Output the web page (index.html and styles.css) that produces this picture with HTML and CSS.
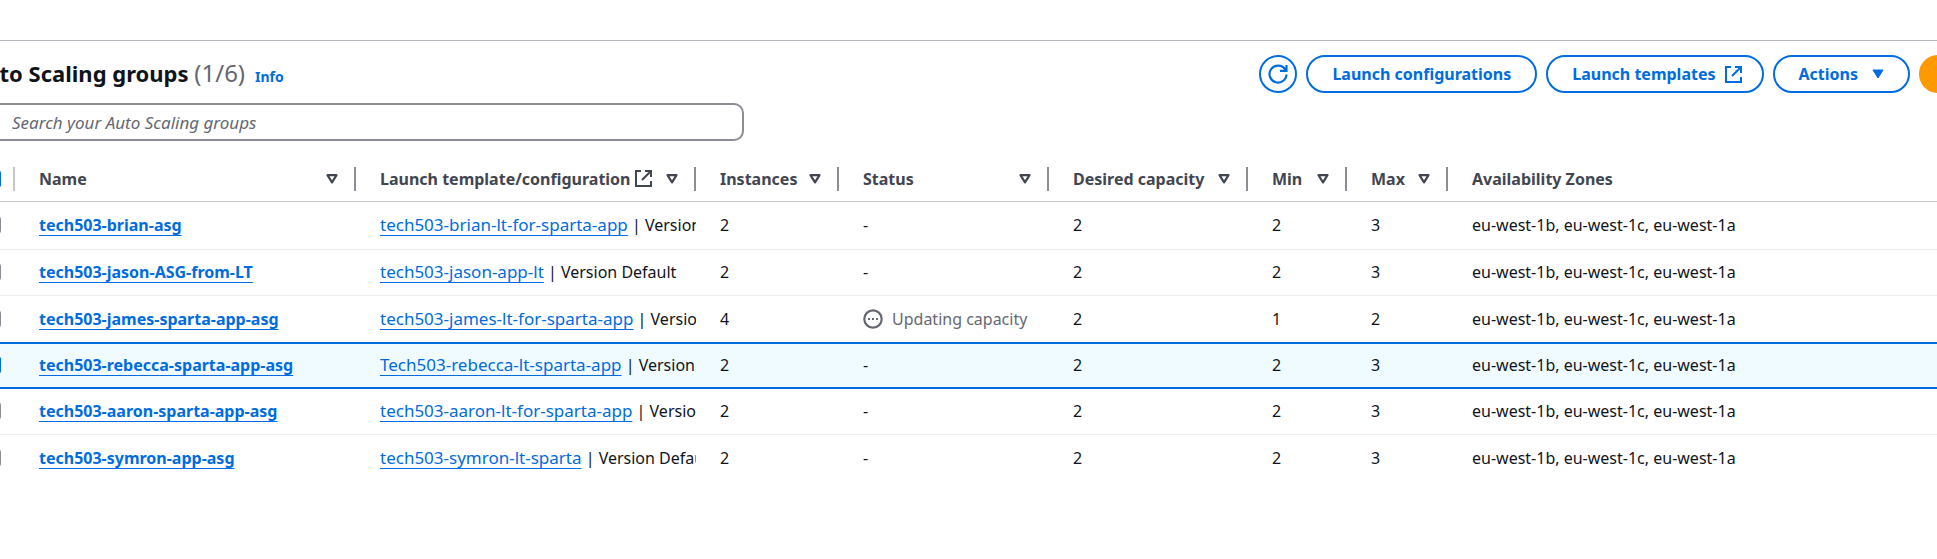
FILE: index.html
```html
<!DOCTYPE html>
<html lang="en">
<head>
<meta charset="utf-8">
<title>Auto Scaling groups</title>
<link rel="stylesheet" href="styles.css">
</head>
<body>
<svg class="sprite" aria-hidden="true">
  <symbol id="external" viewBox="0 0 17 17"><path d="M10 1h6v6M7 10l8.500-8.500M16 11v5H1V1h5" fill="none" stroke="currentColor" stroke-width="2"/></symbol>
  <symbol id="sort" viewBox="0 0 12 10"><path d="M1.500 1.200h9L6 8.300z" fill="none" stroke="currentColor" stroke-width="2.200" stroke-linejoin="round"/></symbol>
  <symbol id="caret" viewBox="0 0 12 10"><path d="M1 1h10L6 9z" fill="currentColor" stroke="currentColor" stroke-linejoin="round"/></symbol>
  <symbol id="refresh" viewBox="0 0 20 20"><path d="M18.500 10.500a8.500 8.500 0 1 1-1.500-5.300l1 1.300M18.500 1v5.800H12" fill="none" stroke="currentColor" stroke-width="2.200"/></symbol>
  <symbol id="pending" viewBox="0 0 20 20"><circle cx="10" cy="10" r="8.700" fill="none" stroke="currentColor" stroke-width="2.200"/><path d="M5 9h2v2H5zM9 9h2v2H9zM13 9h2v2h-2z" fill="currentColor"/></symbol>
</svg>
<main class="panel">
  <header class="head">
    <h1 class="title">Auto Scaling groups <span class="count">(1/6)</span></h1>
    <a class="info" href="#">Info</a>
    <div class="actions">
      <button class="btn round" aria-label="Refresh"><svg class="icon refresh"><use href="#refresh"/></svg></button>
      <button class="btn">Launch configurations</button>
      <button class="btn external">Launch templates <svg class="icon"><use href="#external"/></svg></button>
      <button class="btn menu">Actions <svg class="tri"><use href="#caret"/></svg></button>
      <button class="btn primary" aria-label="Create Auto Scaling group"></button>
    </div>
  </header>
  <input class="search" type="search" aria-label="Search your Auto Scaling groups" placeholder="Search your Auto Scaling groups">
  <table class="grid">
    <colgroup><col class="c-check"><col class="c-name"><col class="c-lt"><col class="c-inst"><col class="c-status"><col class="c-cap"><col class="c-min"><col class="c-max"><col></colgroup>
    <thead>
      <tr>
        <th class="pick"><div class="th first"><input class="check on" type="checkbox" aria-label="Select all"></div></th>
        <th><div class="th"><span>Name</span><svg class="tri"><use href="#sort"/></svg></div></th>
        <th><div class="th"><span class="label">Launch template/configuration <svg class="icon"><use href="#external"/></svg></span><svg class="tri"><use href="#sort"/></svg></div></th>
        <th><div class="th"><span>Instances</span><svg class="tri"><use href="#sort"/></svg></div></th>
        <th><div class="th"><span>Status</span><svg class="tri"><use href="#sort"/></svg></div></th>
        <th><div class="th"><span>Desired capacity</span><svg class="tri"><use href="#sort"/></svg></div></th>
        <th><div class="th"><span>Min</span><svg class="tri"><use href="#sort"/></svg></div></th>
        <th><div class="th"><span>Max</span><svg class="tri"><use href="#sort"/></svg></div></th>
        <th><div class="th last"><span>Availability Zones</span></div></th>
      </tr>
    </thead>
    <tbody>
      <tr><td class="pick"><input class="check" type="checkbox" aria-label="tech503-brian-asg"></td><td><a class="name" href="#">tech503-brian-asg</a></td><td><div class="clip"><a href="#">tech503-brian-lt-for-sparta-app</a> | Version Default</div></td><td>2</td><td>-</td><td>2</td><td>2</td><td>3</td><td>eu-west-1b, eu-west-1c, eu-west-1a</td></tr>
      <tr><td class="pick"><input class="check" type="checkbox" aria-label="tech503-jason-ASG-from-LT"></td><td><a class="name" href="#">tech503-jason-ASG-from-LT</a></td><td><div class="clip"><a href="#">tech503-jason-app-lt</a> | Version Default</div></td><td>2</td><td>-</td><td>2</td><td>2</td><td>3</td><td>eu-west-1b, eu-west-1c, eu-west-1a</td></tr>
      <tr><td class="pick"><input class="check" type="checkbox" aria-label="tech503-james-sparta-app-asg"></td><td><a class="name" href="#">tech503-james-sparta-app-asg</a></td><td><div class="clip"><a href="#">tech503-james-lt-for-sparta-app</a> | Version Default</div></td><td>4</td><td><div class="status"><svg class="icon pending"><use href="#pending"/></svg>Updating capacity</div></td><td>2</td><td>1</td><td>2</td><td>eu-west-1b, eu-west-1c, eu-west-1a</td></tr>
      <tr class="selected"><td class="pick"><input class="check on" type="checkbox" checked aria-label="tech503-rebecca-sparta-app-asg"></td><td><a class="name" href="#">tech503-rebecca-sparta-app-asg</a></td><td><div class="clip"><a href="#">Tech503-rebecca-lt-sparta-app</a> | Version Default</div></td><td>2</td><td>-</td><td>2</td><td>2</td><td>3</td><td>eu-west-1b, eu-west-1c, eu-west-1a</td></tr>
      <tr><td class="pick"><input class="check" type="checkbox" aria-label="tech503-aaron-sparta-app-asg"></td><td><a class="name" href="#">tech503-aaron-sparta-app-asg</a></td><td><div class="clip"><a href="#">tech503-aaron-lt-for-sparta-app</a> | Version Default</div></td><td>2</td><td>-</td><td>2</td><td>2</td><td>3</td><td>eu-west-1b, eu-west-1c, eu-west-1a</td></tr>
      <tr><td class="pick"><input class="check" type="checkbox" aria-label="tech503-symron-app-asg"></td><td><a class="name" href="#">tech503-symron-app-asg</a></td><td><div class="clip"><a href="#">tech503-symron-lt-sparta</a> | Version Default</div></td><td>2</td><td>-</td><td>2</td><td>2</td><td>3</td><td>eu-west-1b, eu-west-1c, eu-west-1a</td></tr>
    </tbody>
  </table>
</main>
</body>
</html>
```
FILE: styles.css
```css
* { box-sizing: border-box; }
body {
  margin: 0;
  padding-top: 40px;
  overflow: hidden;
  background: #fff;
  color: #0f141a;
  font: 16px/24px "Noto Sans", "Open Sans", sans-serif;
}
.sprite { display: none; }
.panel {
  margin: 0 -42px 0 -30px;
  border-top: 1px solid #b4b4bb;
}
.head {
  display: flex;
  align-items: center;
  padding-top: 14px;
}
.title { margin: 0; padding-bottom: 2px; font-size: 22px; line-height: 32px; font-weight: 700; }
.count { font-size: 24px; font-weight: 400; color: #656871; }
.info {
  margin: 6px 0 0 10px;
  font-size: 14px;
  font-weight: 700;
  text-decoration: none;
}
a { color: #006ce0; text-underline-offset: 4px; text-decoration-thickness: 1px; text-decoration-skip-ink: none; }
.actions { display: flex; gap: 9px; margin-left: auto; }
.btn {
  display: flex;
  align-items: center;
  justify-content: center;
  gap: 9px;
  height: 38px;
  padding: 0 24px;
  border: 2px solid #006ce0;
  border-radius: 20px;
  background: #fff;
  color: #006ce0;
  font: inherit;
  font-weight: 700;
  white-space: nowrap;
}
.round { width: 38px; padding: 0; }
.external { padding-right: 20px; }
.menu { gap: 14px; }
.primary { width: 60px; border-color: #f90; background: #f90; }
.icon { flex: none; width: 17px; height: 17px; }
.refresh { width: 20px; height: 20px; }
.pending { width: 20px; height: 20px; }
.tri { flex: none; width: 12px; height: 10px; }
.search {
  display: block;
  width: 774px;
  max-width: 100%;
  height: 38px;
  margin-top: 10px;
  padding: 0 40px;
  border: 2px solid #8c8c94;
  border-radius: 10px;
  background: #fff;
  font: inherit;
  font-size: 17px;
  appearance: none;
}
.search::placeholder { color: #656871; font-style: italic; opacity: 1; }
.grid {
  width: 100%;
  margin-top: 12px;
  table-layout: fixed;
  border-collapse: separate;
  border-spacing: 0;
}
.c-check { width: 45px; }
.c-name { width: 341px; }
.c-lt { width: 340px; }
.c-inst { width: 143px; }
.c-status { width: 210px; }
.c-cap { width: 199px; }
.c-min { width: 99px; }
.c-max { width: 101px; }
th {
  height: 49px;
  padding: 3px 0 0;
  border-bottom: 1px solid #c6c6cd;
  color: #424650;
  text-align: left;
  white-space: nowrap;
}
.th {
  display: flex;
  align-items: center;
  justify-content: space-between;
  height: 24px;
  padding: 0 16px 0 24px;
  border-right: 2px solid #8c8c94;
}
.first { padding: 0 0 0 13px; border-color: #c6c6cd; }
.last { border-right: 0; }
.label { display: flex; align-items: center; gap: 4px; }
td {
  height: 46px;
  padding: 0 0 1px 24px;
  border-bottom: 1px solid #ebebf0;
  white-space: nowrap;
}
tbody tr:first-child td { height: 48px; }
tbody tr:last-child td { border-bottom: 0; }
tbody tr:nth-child(3) td { border-bottom: 0; }
.selected td {
  height: 47px;
  border-top: 2px solid #006ce0;
  border-bottom: 2px solid #006ce0;
  background: #f0fbff;
}
.name { font-weight: 700; }
.clip { overflow: hidden; }
.clip a { font-size: 17px; }
.status { display: flex; align-items: center; gap: 9px; color: #656871; }
td.pick { padding-left: 13px; }
.check {
  display: block;
  width: 18px;
  height: 18px;
  margin: 0;
  border: 1px solid #8c8c94;
  border-radius: 3px;
  background: #fff;
  appearance: none;
}
.on { border-color: #006ce0; background: #006ce0; }
```
